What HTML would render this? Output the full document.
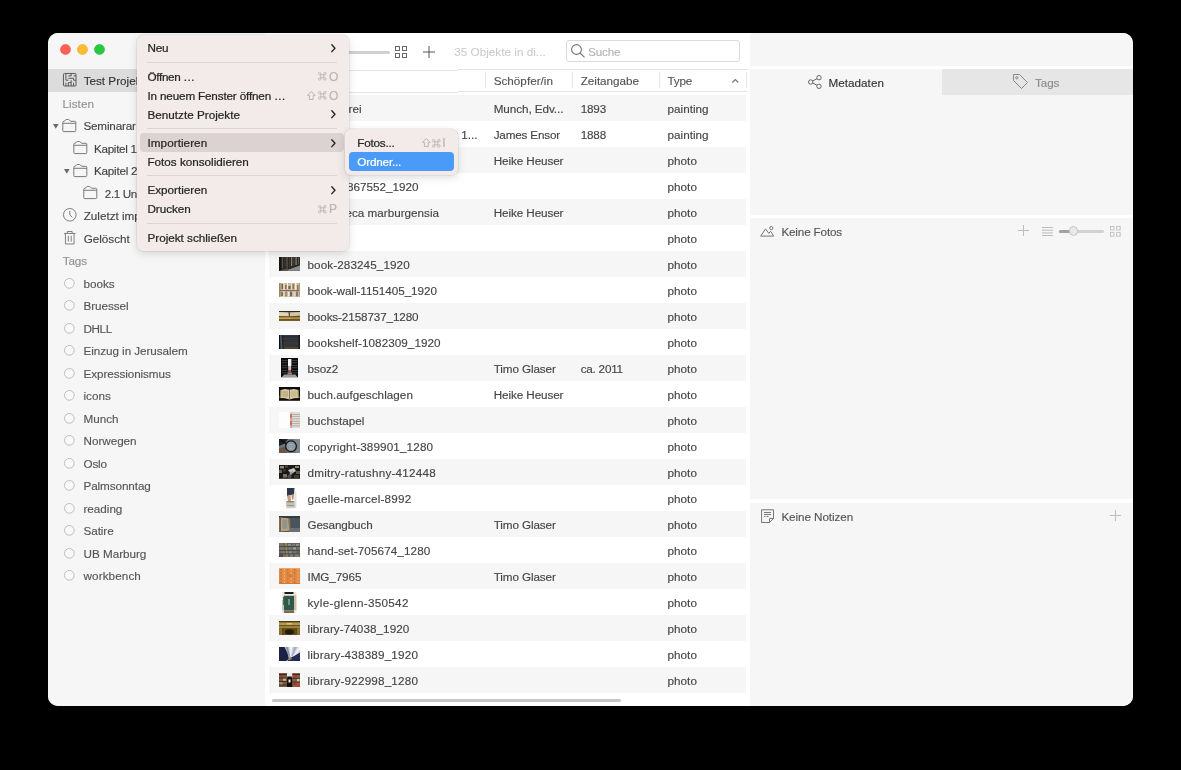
<!DOCTYPE html>
<html><head><meta charset="utf-8"><title>Tropy</title>
<style>
*{box-sizing:border-box;margin:0;padding:0}
html,body{width:1181px;height:770px;background:#000;overflow:hidden}
body{font-family:"Liberation Sans",sans-serif;font-size:11.7px;color:#444;position:relative;-webkit-text-stroke-width:.14px}
.abs{position:absolute}
#win{position:absolute;left:48.200px;top:32.800px;width:1084.700px;height:673px;background:#fff;border-radius:10px;overflow:hidden}
#side{position:absolute;left:0;top:0;width:217.400px;height:673px;background:#f6f6f6}
.t{position:absolute;white-space:nowrap;line-height:16px;height:16px}
.g{color:#919191}
.row{position:absolute;left:220.800px;width:477.700px;height:26px}
.row.s{background:#f6f6f6}
.th{position:absolute;overflow:hidden}
.circ{position:absolute;width:10.600px;height:10.600px;border:1px solid #bdbdbd;border-radius:50%;background:#f9f9f9;left:15.900px}
.p{position:absolute;left:702.200px;width:383px;background:#f6f6f6}
.menu{position:absolute;background:#f3ebea;border-radius:6px;box-shadow:0 0 0 .5px rgba(0,0,0,.10),0 3px 9px rgba(0,0,0,.13);color:#262626}
.menu .t{color:#262626;-webkit-text-stroke-width:.24px}
.sep{position:absolute;left:10px;right:12px;height:1px;background:#ddd5d4}
svg{position:absolute;overflow:visible}
#in{position:absolute;left:-.2px;top:.2px;width:1085px;height:673px}
#root{position:absolute;left:0;top:0;width:1181px;height:770px;will-change:transform}
</style></head><body><div id="root">
<div id="win"><div id="in">
<svg width="0" height="0" style="left:0;top:0"><defs><filter id="bl" x="-5%" y="-5%" width="110%" height="110%"><feGaussianBlur stdDeviation=".45"/></filter></defs></svg>

<div id="side">
<svg style="left:11.60px;top:10.80px" width="11" height="11" viewBox="0 0 11 11"><circle cx="5.500" cy="5.500" r="5.050" fill="#fe5f57" stroke="#e2463f" stroke-width=".5"/></svg>
<svg style="left:28.90px;top:10.80px" width="11" height="11" viewBox="0 0 11 11"><circle cx="5.500" cy="5.500" r="5.050" fill="#febc2e" stroke="#dfa023" stroke-width=".5"/></svg>
<svg style="left:46.20px;top:10.80px" width="11" height="11" viewBox="0 0 11 11"><circle cx="5.500" cy="5.500" r="5.050" fill="#28c840" stroke="#1dad2b" stroke-width=".5"/></svg>
<div class="abs" style="left:0;top:36.500px;width:217.400px;height:22.200px;background:#dcdcdc"></div>
<svg style="left:15px;top:40.200px" width="13.500" height="13.500" viewBox="0 0 14 14" fill="none" stroke="#555" stroke-width="1"><rect x=".5" y=".5" width="13" height="13" rx="1"/><path d="M3 .5v7h2.500M5.500 3h3M8.500 .5v2.500M11 3h2.500M5.500 5.500h5.500v2h2.500M3 10v3.500M5.500 13.500v-3.500h3v3.500M11 10v3.500M8.500 7.500v2.500"/></svg>
<div class="t" style="top:40.00px;left:35.70px;color:#333;">Test Projekt</div>
<div class="t g" style="top:63.00px;left:14.60px;letter-spacing:0.030px;">Listen</div>
<svg style="left:5.40px;top:90.85px" width="5.600" height="4.800" viewBox="0 0 5.600 4.800"><path d="M0 0h5.600l-2.800 4.800z" fill="#6a6a6a"/></svg>
<svg style="left:14.00px;top:86.00px" width="14.600" height="13" viewBox="0 0 14.600 13" fill="none" stroke="#787878" stroke-width="1"><path d="M.8 11.600Q.8 12.600 1.800 12.600H12.800Q13.800 12.600 13.800 11.600V3.300Q13.800 2.300 12.800 2.300H8.600L7.400 .9Q7.100 .5 6.600 .5H4.200Q3.700 .5 3.400 .9L2.300 2.300H1.800Q.8 2.300 .8 3.300Z"/><path d="M.8 4.300H13.800"/></svg>
<div class="t" style="top:85.00px;left:35.40px;letter-spacing:-0.174px;">Seminarar</div>
<svg style="left:24.70px;top:108.50px" width="14.600" height="13" viewBox="0 0 14.600 13" fill="none" stroke="#787878" stroke-width="1"><path d="M.8 11.600Q.8 12.600 1.800 12.600H12.800Q13.800 12.600 13.800 11.600V3.300Q13.800 2.300 12.800 2.300H8.600L7.400 .9Q7.100 .5 6.600 .5H4.200Q3.700 .5 3.400 .9L2.300 2.300H1.800Q.8 2.300 .8 3.300Z"/><path d="M.8 4.300H13.800"/></svg>
<div class="t" style="top:108.00px;left:46.00px;letter-spacing:-0.315px;">Kapitel 1</div>
<svg style="left:16.10px;top:135.85px" width="5.600" height="4.800" viewBox="0 0 5.600 4.800"><path d="M0 0h5.600l-2.800 4.800z" fill="#6a6a6a"/></svg>
<svg style="left:24.70px;top:131.00px" width="14.600" height="13" viewBox="0 0 14.600 13" fill="none" stroke="#787878" stroke-width="1"><path d="M.8 11.600Q.8 12.600 1.800 12.600H12.800Q13.800 12.600 13.800 11.600V3.300Q13.800 2.300 12.800 2.300H8.600L7.400 .9Q7.100 .5 6.600 .5H4.200Q3.700 .5 3.400 .9L2.300 2.300H1.800Q.8 2.300 .8 3.300Z"/><path d="M.8 4.300H13.800"/></svg>
<div class="t" style="top:130.00px;left:46.00px;letter-spacing:-0.248px;">Kapitel 2</div>
<svg style="left:34.80px;top:153.50px" width="14.600" height="13" viewBox="0 0 14.600 13" fill="none" stroke="#787878" stroke-width="1"><path d="M.8 11.600Q.8 12.600 1.800 12.600H12.800Q13.800 12.600 13.800 11.600V3.300Q13.800 2.300 12.800 2.300H8.600L7.400 .9Q7.100 .5 6.600 .5H4.200Q3.700 .5 3.400 .9L2.300 2.300H1.800Q.8 2.300 .8 3.300Z"/><path d="M.8 4.300H13.800"/></svg>
<div class="t" style="top:153.00px;left:56.80px;letter-spacing:-0.379px;">2.1 Un</div>
<svg style="left:15px;top:175.45px" width="13.600" height="13.600" viewBox="0 0 14 14" fill="none" stroke="#7a7a7a" stroke-width="1"><circle cx="7" cy="7" r="6.500"/><path d="M7 3v4.200l2.600 2.300"/></svg>
<div class="t" style="top:175.00px;left:35.70px;">Zuletzt importiert</div>
<svg style="left:16.20px;top:197.85px" width="11.500" height="13.500" viewBox="0 0 12 14" fill="none" stroke="#7a7a7a" stroke-width="1"><path d="M0 2.500h12M3.500 2.500v-2h5v2M1.500 2.500v11h9v-11M4.500 5v6M7.500 5v6"/></svg>
<div class="t" style="top:198.00px;left:35.70px;letter-spacing:-0.009px;">Gelöscht</div>
<div class="t g" style="top:220.00px;left:14.70px;letter-spacing:-0.104px;">Tags</div>
<svg style="left:15.90px;top:244.90px" width="10.700" height="10.700" viewBox="0 0 10.700 10.700"><circle cx="5.350" cy="5.350" r="4.850" fill="#f9f9f9" stroke="#bcbcbc" stroke-width="1"/></svg>
<div class="t" style="top:243.00px;left:35.50px;letter-spacing:-0.024px;color:#555;">books</div>
<svg style="left:15.90px;top:267.40px" width="10.700" height="10.700" viewBox="0 0 10.700 10.700"><circle cx="5.350" cy="5.350" r="4.850" fill="#f9f9f9" stroke="#bcbcbc" stroke-width="1"/></svg>
<div class="t" style="top:265.00px;left:35.50px;letter-spacing:-0.065px;color:#555;">Bruessel</div>
<svg style="left:15.90px;top:289.90px" width="10.700" height="10.700" viewBox="0 0 10.700 10.700"><circle cx="5.350" cy="5.350" r="4.850" fill="#f9f9f9" stroke="#bcbcbc" stroke-width="1"/></svg>
<div class="t" style="top:288.00px;left:35.50px;letter-spacing:-0.378px;color:#555;">DHLL</div>
<svg style="left:15.90px;top:312.40px" width="10.700" height="10.700" viewBox="0 0 10.700 10.700"><circle cx="5.350" cy="5.350" r="4.850" fill="#f9f9f9" stroke="#bcbcbc" stroke-width="1"/></svg>
<div class="t" style="top:310.00px;left:35.50px;letter-spacing:-0.055px;color:#555;">Einzug in Jerusalem</div>
<svg style="left:15.90px;top:334.90px" width="10.700" height="10.700" viewBox="0 0 10.700 10.700"><circle cx="5.350" cy="5.350" r="4.850" fill="#f9f9f9" stroke="#bcbcbc" stroke-width="1"/></svg>
<div class="t" style="top:333.00px;left:35.50px;letter-spacing:-0.075px;color:#555;">Expressionismus</div>
<svg style="left:15.90px;top:357.40px" width="10.700" height="10.700" viewBox="0 0 10.700 10.700"><circle cx="5.350" cy="5.350" r="4.850" fill="#f9f9f9" stroke="#bcbcbc" stroke-width="1"/></svg>
<div class="t" style="top:355.00px;left:35.50px;letter-spacing:-0.003px;color:#555;">icons</div>
<svg style="left:15.90px;top:379.90px" width="10.700" height="10.700" viewBox="0 0 10.700 10.700"><circle cx="5.350" cy="5.350" r="4.850" fill="#f9f9f9" stroke="#bcbcbc" stroke-width="1"/></svg>
<div class="t" style="top:378.00px;left:35.50px;letter-spacing:-0.003px;color:#555;">Munch</div>
<svg style="left:15.90px;top:402.40px" width="10.700" height="10.700" viewBox="0 0 10.700 10.700"><circle cx="5.350" cy="5.350" r="4.850" fill="#f9f9f9" stroke="#bcbcbc" stroke-width="1"/></svg>
<div class="t" style="top:400.00px;left:35.50px;letter-spacing:-0.029px;color:#555;">Norwegen</div>
<svg style="left:15.90px;top:424.90px" width="10.700" height="10.700" viewBox="0 0 10.700 10.700"><circle cx="5.350" cy="5.350" r="4.850" fill="#f9f9f9" stroke="#bcbcbc" stroke-width="1"/></svg>
<div class="t" style="top:423.00px;left:35.50px;letter-spacing:-0.189px;color:#555;">Oslo</div>
<svg style="left:15.90px;top:447.40px" width="10.700" height="10.700" viewBox="0 0 10.700 10.700"><circle cx="5.350" cy="5.350" r="4.850" fill="#f9f9f9" stroke="#bcbcbc" stroke-width="1"/></svg>
<div class="t" style="top:445.00px;left:35.50px;letter-spacing:-0.090px;color:#555;">Palmsonntag</div>
<svg style="left:15.90px;top:469.90px" width="10.700" height="10.700" viewBox="0 0 10.700 10.700"><circle cx="5.350" cy="5.350" r="4.850" fill="#f9f9f9" stroke="#bcbcbc" stroke-width="1"/></svg>
<div class="t" style="top:468.00px;left:35.50px;letter-spacing:-0.019px;color:#555;">reading</div>
<svg style="left:15.90px;top:492.40px" width="10.700" height="10.700" viewBox="0 0 10.700 10.700"><circle cx="5.350" cy="5.350" r="4.850" fill="#f9f9f9" stroke="#bcbcbc" stroke-width="1"/></svg>
<div class="t" style="top:490.00px;left:35.50px;letter-spacing:-0.077px;color:#555;">Satire</div>
<svg style="left:15.90px;top:514.90px" width="10.700" height="10.700" viewBox="0 0 10.700 10.700"><circle cx="5.350" cy="5.350" r="4.850" fill="#f9f9f9" stroke="#bcbcbc" stroke-width="1"/></svg>
<div class="t" style="top:513.00px;left:35.50px;letter-spacing:-0.017px;color:#555;">UB Marburg</div>
<svg style="left:15.90px;top:537.40px" width="10.700" height="10.700" viewBox="0 0 10.700 10.700"><circle cx="5.350" cy="5.350" r="4.850" fill="#f9f9f9" stroke="#bcbcbc" stroke-width="1"/></svg>
<div class="t" style="top:535.00px;left:35.50px;letter-spacing:0.102px;color:#555;">workbench</div>
</div>
<div class="abs" style="left:289px;top:17.600px;width:52.700px;height:3px;border-radius:2px;background:#d0d0d0"></div>
<svg style="left:347.00px;top:13.20px" width="12" height="12" viewBox="0 0 12 12" fill="none" stroke="#666" stroke-width="1"><rect x=".5" y=".5" width="4" height="4"/><rect x="7.500" y=".5" width="4" height="4"/><rect x=".5" y="7.500" width="4" height="4"/><rect x="7.500" y="7.500" width="4" height="4"/></svg>
<svg style="left:375.00px;top:12.80px" width="12" height="12" viewBox="0 0 12 12" fill="none" stroke="#555" stroke-width="1"><path d="M6.0 0v12M0 6.0h12"/></svg>
<div class="t" style="top:11.00px;left:406.20px;letter-spacing:0.029px;color:#cacaca;-webkit-text-stroke-width:.05px;">35 Objekte in di...</div>
<div class="abs" style="left:518px;top:7.400px;width:174px;height:21.200px;border:1px solid #dadada;border-radius:3px;background:#fff"></div>
<svg style="left:522.700px;top:11.300px" width="14" height="13.500" viewBox="0 0 14 13.500" fill="none" stroke="#777" stroke-width="1.100"><circle cx="5.500" cy="5.500" r="4.900"/><path d="M9 9l4.600 4.300"/></svg>
<div class="t" style="top:11.00px;left:540.00px;letter-spacing:-0.155px;color:#b4b4b4;">Suche</div>
<div class="abs" style="left:410px;top:36.100px;width:288.500px;height:1px;background:#e4e4e4"></div>
<div class="abs" style="left:410px;top:57.700px;width:288.500px;height:1px;background:#e4e4e4"></div>
<div class="abs" style="left:220.800px;top:36.800px;width:189.200px;height:1px;background:#e4e4e4"></div>
<div class="abs" style="left:220.800px;top:59.100px;width:189.200px;height:1px;background:#e4e4e4"></div>
<div class="abs" style="left:437.40px;top:39.500px;width:1px;height:16px;background:#e6e6e6"></div>
<div class="abs" style="left:523.90px;top:39.500px;width:1px;height:16px;background:#e6e6e6"></div>
<div class="abs" style="left:610.90px;top:39.500px;width:1px;height:16px;background:#e6e6e6"></div>
<div class="abs" style="left:697.50px;top:39.500px;width:1px;height:16px;background:#e6e6e6"></div>
<div class="t" style="top:40.00px;left:259.50px;color:#555;">Titel</div>
<div class="t" style="top:40.00px;left:445.70px;letter-spacing:0.010px;color:#555;">Schöpfer/in</div>
<div class="t" style="top:40.00px;left:532.70px;letter-spacing:-0.015px;color:#555;">Zeitangabe</div>
<div class="t" style="top:40.00px;left:619.50px;letter-spacing:-0.191px;color:#555;">Type</div>
<svg style="left:684.300px;top:45.800px" width="6.600" height="3.800" viewBox="0 0 7 4" fill="none" stroke="#777" stroke-width="1.200"><path d="M.3 3.700l3.200-3.200 3.200 3.200"/></svg>
<div class="row s" style="top:62.3px">
<div class="t" style="top:5.70px;right:385.00px;">Der Schrei</div>
<div class="t" style="top:5.70px;left:224.90px;letter-spacing:-0.066px;">Munch, Edv...</div>
<div class="t" style="top:5.70px;left:311.90px;letter-spacing:-0.182px;">1893</div>
<div class="t" style="top:5.70px;left:398.70px;letter-spacing:0.027px;">painting</div>
</div>
<div class="row" style="top:88.3px">
<div class="t" style="top:5.70px;right:269.10px;">Einzug Christi in Brüssel im Jahr 1...</div>
<div class="t" style="top:5.70px;left:224.90px;letter-spacing:-0.180px;">James Ensor</div>
<div class="t" style="top:5.70px;left:311.90px;letter-spacing:-0.182px;">1888</div>
<div class="t" style="top:5.70px;left:398.70px;letter-spacing:0.027px;">painting</div>
</div>
<div class="row s" style="top:114.3px">
<div class="t" style="top:5.70px;left:38.70px;">bibliothek</div>
<div class="t" style="top:5.70px;left:224.90px;letter-spacing:-0.090px;">Heike Heuser</div>
<div class="t" style="top:5.70px;left:398.70px;letter-spacing:0.044px;">photo</div>
</div>
<div class="row" style="top:140.3px">
<div class="t" style="top:5.70px;right:328.00px;">book-1867552_1920</div>
<div class="t" style="top:5.70px;left:398.70px;letter-spacing:0.044px;">photo</div>
</div>
<div class="row s" style="top:166.3px">
<div class="t" style="top:5.70px;right:307.50px;">Bibliotheca marburgensia</div>
<div class="t" style="top:5.70px;left:224.90px;letter-spacing:-0.090px;">Heike Heuser</div>
<div class="t" style="top:5.70px;left:398.70px;letter-spacing:0.044px;">photo</div>
</div>
<div class="row" style="top:192.3px">
<div class="t" style="top:5.70px;left:38.70px;">book</div>
<div class="t" style="top:5.70px;left:398.70px;letter-spacing:0.044px;">photo</div>
</div>
<div class="row s" style="top:218.3px">
<svg class="th" style="left:10.30px;top:6.00px;overflow:hidden" width="21" height="13.8" viewBox="0 0 21 13.8"><g filter="url(#bl)"><rect x="0" y="0" width="21" height="13.8" fill="#2b2723"/><rect x="0" y="0" width="2" height="13.8" fill="#141210"/><rect x="3" y="0" width="1" height="11" fill="#575149"/><rect x="5.5" y="0" width="0.8" height="10" fill="#423d37"/><rect x="7.5" y="0" width="1" height="10.5" fill="#6f695f"/><rect x="10" y="0" width="0.8" height="10" fill="#4a453e"/><rect x="12" y="0" width="1.2" height="9" fill="#857f74"/><rect x="14.5" y="0" width="0.8" height="8.5" fill="#565149"/><rect x="16.5" y="0" width="1.2" height="8" fill="#8c867b"/><rect x="19" y="0" width="1" height="7.5" fill="#5d574f"/><polygon points="6,13.8 21,8.500 21,13.8" fill="#8b8c8e"/><polygon points="0,13.8 9,11 9,13.8" fill="#55524d"/></g></svg>
<div class="t" style="top:5.70px;left:38.70px;letter-spacing:0.097px;">book-283245_1920</div>
<div class="t" style="top:5.70px;left:398.70px;letter-spacing:0.044px;">photo</div>
</div>
<div class="row" style="top:244.3px">
<svg class="th" style="left:10.30px;top:6.00px;overflow:hidden" width="21" height="13.8" viewBox="0 0 21 13.8"><g filter="url(#bl)"><rect x="0" y="0" width="21" height="13.8" fill="#c8b8a0"/><rect x="0" y="0" width="1.5" height="13.8" fill="#9c8467"/><rect x="2.5" y="1" width="1.5" height="5" fill="#7a6048"/><rect x="4.5" y="0" width="1" height="13.8" fill="#efe9dc"/><rect x="6" y="2" width="1.5" height="4" fill="#8b6f52"/><rect x="8" y="0" width="1" height="6" fill="#f3eee3"/><rect x="9.5" y="3" width="2" height="3" fill="#6d5843"/><rect x="12" y="0" width="1" height="13.8" fill="#e9e1d0"/><rect x="13.5" y="1" width="1.5" height="5" fill="#8a7058"/><rect x="16" y="0" width="1.5" height="7" fill="#f1ebdf"/><rect x="18" y="2" width="1.5" height="5" fill="#94785a"/><rect x="20" y="0" width="1" height="13.8" fill="#b09a7e"/><rect x="1" y="7" width="19" height="1" fill="#7f6a52"/><rect x="2" y="9" width="2" height="4" fill="#8c7358"/><rect x="6" y="8.5" width="2" height="5" fill="#a68d6e"/><rect x="9" y="9" width="1.5" height="4" fill="#f0eadd"/><rect x="11" y="8.5" width="2" height="5" fill="#7b6450"/><rect x="14.5" y="9" width="2" height="4" fill="#ded3bf"/><rect x="17" y="8.5" width="2" height="5" fill="#8f775b"/></g></svg>
<div class="t" style="top:5.70px;left:38.70px;letter-spacing:-0.042px;">book-wall-1151405_1920</div>
<div class="t" style="top:5.70px;left:398.70px;letter-spacing:0.044px;">photo</div>
</div>
<div class="row s" style="top:270.3px">
<svg class="th" style="left:10.30px;top:8.00px;overflow:hidden" width="21" height="9.8" viewBox="0 0 21 9.8"><g filter="url(#bl)"><rect x="0" y="0" width="21" height="9.8" fill="#8a6b2e"/><rect x="0" y="0" width="21" height="1" fill="#2e2a20"/><polygon points="0,1 9.500,1.500 10,5.500 0,5" fill="#ddd6bd"/><polygon points="11,1.500 21,1 21,4.500 11,5.500" fill="#cfc8ae"/><polygon points="9.500,1.500 11,1.500 11,5.500 10,5.500" fill="#5c5a40"/><rect x="0" y="5.5" width="21" height="0.8" fill="#3b301c"/><rect x="0" y="6.3" width="21" height="1.7" fill="#c7a552"/><rect x="0" y="8" width="21" height="1.8" fill="#6f5423"/><rect x="12" y="6.3" width="9" height="1.2" fill="#9b7d3a"/></g></svg>
<div class="t" style="top:5.70px;left:38.70px;letter-spacing:-0.117px;">books-2158737_1280</div>
<div class="t" style="top:5.70px;left:398.70px;letter-spacing:0.044px;">photo</div>
</div>
<div class="row" style="top:296.3px">
<svg class="th" style="left:10.30px;top:5.90px;overflow:hidden" width="21" height="14" viewBox="0 0 21 14"><g filter="url(#bl)"><rect x="0" y="0" width="21" height="14" fill="#22262a"/><polygon points="0,0 2.500,0 3.500,14 1,14" fill="#4d5a64"/><polygon points="0,0 1,0 1.500,14 0,14" fill="#0f1113"/><rect x="4" y="0" width="17" height="0.8" fill="#3a3f45"/><rect x="4" y="3.5" width="17" height="0.7" fill="#4b5057"/><rect x="4" y="7" width="17" height="0.7" fill="#3f444a"/><rect x="4" y="10.5" width="17" height="0.7" fill="#4a4038"/><rect x="5" y="1.2" width="15" height="2" fill="#2d3237"/><rect x="5" y="4.5" width="15" height="2.2" fill="#33383d"/><rect x="5" y="8" width="15" height="2.2" fill="#3a3631"/><rect x="5" y="11.5" width="15" height="2.5" fill="#4d4238"/><rect x="19.5" y="0" width="1.5" height="14" fill="#15181a"/></g></svg>
<div class="t" style="top:5.70px;left:38.70px;letter-spacing:0.056px;">bookshelf-1082309_1920</div>
<div class="t" style="top:5.70px;left:398.70px;letter-spacing:0.044px;">photo</div>
</div>
<div class="row s" style="top:322.3px">
<svg class="th" style="left:12.10px;top:2.80px;overflow:hidden" width="17.4" height="20.2" viewBox="0 0 17.4 20.2"><g filter="url(#bl)"><rect x="0" y="0" width="17.4" height="20.2" fill="#0c0c0c"/><rect x="1" y="2" width="5.5" height="0.6" fill="#5a5a5a"/><rect x="11" y="2" width="5.5" height="0.6" fill="#5a5a5a"/><rect x="1" y="4.5" width="5.5" height="0.6" fill="#5a5a5a"/><rect x="11" y="4.5" width="5.5" height="0.6" fill="#5a5a5a"/><rect x="1" y="7" width="5.5" height="0.6" fill="#5a5a5a"/><rect x="11" y="7" width="5.5" height="0.6" fill="#5a5a5a"/><rect x="1" y="9.5" width="5.5" height="0.6" fill="#5a5a5a"/><rect x="11" y="9.5" width="5.5" height="0.6" fill="#5a5a5a"/><rect x="1" y="12" width="5.5" height="0.6" fill="#5a5a5a"/><rect x="11" y="12" width="5.5" height="0.6" fill="#5a5a5a"/><rect x="1" y="14.5" width="5.5" height="0.6" fill="#5a5a5a"/><rect x="11" y="14.5" width="5.5" height="0.6" fill="#5a5a5a"/><rect x="7" y="1" width="3.4" height="7" fill="#f4f4f4"/><rect x="7.2" y="8" width="3" height="4" fill="#c4c4c4"/><rect x="7.2" y="12" width="3" height="2.5" fill="#b2544c"/><rect x="6.5" y="14.5" width="4.4" height="2" fill="#8a8a8a"/><polygon points="0,20.2 3,16.500 14.400,16.500 17.400,20.2" fill="#9b9b9b"/><rect x="0" y="19.2" width="17.4" height="1" fill="#c9c9c9"/></g></svg>
<div class="t" style="top:5.70px;left:38.70px;letter-spacing:-0.084px;">bsoz2</div>
<div class="t" style="top:5.70px;left:224.90px;letter-spacing:-0.107px;">Timo Glaser</div>
<div class="t" style="top:5.70px;left:311.90px;letter-spacing:-0.227px;">ca. 2011</div>
<div class="t" style="top:5.70px;left:398.70px;letter-spacing:0.044px;">photo</div>
</div>
<div class="row" style="top:348.3px">
<svg class="th" style="left:10.30px;top:6.00px;overflow:hidden" width="21" height="13.8" viewBox="0 0 21 13.8"><g filter="url(#bl)"><rect x="0" y="0" width="21" height="13.8" fill="#0e0c09"/><polygon points="1.500,3 6,2 10.500,2.800 15,2 19.500,3 20.300,11 15,11.300 10.500,12.500 6,11.300 .7,11" fill="#d8c9a2"/><polygon points="1.500,3 2.500,3.300 2,10.500 .7,11" fill="#8d7a52"/><polygon points="19.500,3 18.500,3.300 19,10.500 20.300,11" fill="#8d7a52"/><rect x="10.2" y="2.8" width="0.7" height="9.5" fill="#5e4f33"/><rect x="3.5" y="4" width="5.5" height="6" fill="#c3b288"/><rect x="12" y="4" width="5.5" height="6" fill="#cbbb92"/></g></svg>
<div class="t" style="top:5.70px;left:38.70px;letter-spacing:0.048px;">buch.aufgeschlagen</div>
<div class="t" style="top:5.70px;left:224.90px;letter-spacing:-0.090px;">Heike Heuser</div>
<div class="t" style="top:5.70px;left:398.70px;letter-spacing:0.044px;">photo</div>
</div>
<div class="row s" style="top:374.3px">
<svg class="th" style="left:10.30px;top:4.90px;overflow:hidden" width="21" height="16" viewBox="0 0 21 16"><g filter="url(#bl)"><rect x="0" y="0" width="21" height="16" fill="#fdfdfd"/><rect x="11.5" y="0" width="9.5" height="16" fill="#dedad4"/><rect x="11.5" y="2" width="9.5" height="0.7" fill="#a8a29a"/><rect x="11.5" y="4.3" width="9.5" height="0.7" fill="#a8a29a"/><rect x="11.5" y="6.6" width="9.5" height="0.7" fill="#a8a29a"/><rect x="11.5" y="8.9" width="9.5" height="0.7" fill="#a8a29a"/><rect x="11.5" y="11.2" width="9.5" height="0.7" fill="#a8a29a"/><rect x="11.5" y="13.5" width="9.5" height="0.7" fill="#a8a29a"/><rect x="11.5" y="0" width="1.2" height="2" fill="#c8c2b8"/><rect x="11.3" y="2" width="1.3" height="4.6" fill="#c0473a"/><rect x="11.5" y="6.6" width="1.2" height="2.3" fill="#d98a6a"/><rect x="11.3" y="8.9" width="1.3" height="4.6" fill="#b8443a"/><rect x="11.5" y="13.5" width="1.2" height="2.5" fill="#a89888"/></g></svg>
<div class="t" style="top:5.70px;left:38.70px;letter-spacing:0.041px;">buchstapel</div>
<div class="t" style="top:5.70px;left:398.70px;letter-spacing:0.044px;">photo</div>
</div>
<div class="row" style="top:400.3px">
<svg class="th" style="left:10.30px;top:5.90px;overflow:hidden" width="21" height="14" viewBox="0 0 21 14"><g filter="url(#bl)"><rect x="0" y="0" width="21" height="14" fill="#6c767e"/><polygon points="0,0 9,0 5,5 0,7" fill="#1d2024"/><polygon points="0,9 6,8 8,14 0,14" fill="#6a5446"/><polygon points="15,0 21,0 21,14 17,14" fill="#7d8890"/><circle cx="12" cy="7.300" r="5.400" fill="#8e9aa2" stroke="#15171a" stroke-width="1.300"/><polygon points="0,0 2,0 8,4.500 7,5.500" fill="#0e0f11"/><rect x="10" y="5" width="4" height="0.6" fill="#aab4ba"/><rect x="10" y="7" width="4.5" height="0.6" fill="#a3adb4"/><rect x="10" y="9" width="4" height="0.6" fill="#aab4ba"/></g></svg>
<div class="t" style="top:5.70px;left:38.70px;letter-spacing:0.136px;">copyright-389901_1280</div>
<div class="t" style="top:5.70px;left:398.70px;letter-spacing:0.044px;">photo</div>
</div>
<div class="row s" style="top:426.3px">
<svg class="th" style="left:10.30px;top:6.00px;overflow:hidden" width="21" height="13.8" viewBox="0 0 21 13.8"><g filter="url(#bl)"><rect x="0" y="0" width="21" height="13.8" fill="#1b1916"/><rect x="1" y="1" width="4" height="2.5" fill="#8a8476"/><rect x="6" y="0.5" width="3" height="2" fill="#4b463d"/><rect x="0" y="5" width="3" height="3" fill="#6b6558"/><polygon points="9,5 15,3 17,6 12,9" fill="#c9c6bd"/><polygon points="11,7 14,6 13,9.500 10.500,10" fill="#8fa0a8"/><rect x="16" y="1" width="4" height="2" fill="#8d8777"/><rect x="17" y="6" width="4" height="3" fill="#5d584e"/><rect x="4" y="9" width="4" height="3.5" fill="#7a7263"/><circle cx="10.500" cy="11.500" r="2" fill="#55504a"/><rect x="15" y="10" width="5" height="3" fill="#3d3a34"/><rect x="4" y="4.5" width="3" height="2" fill="#3e3a33"/></g></svg>
<div class="t" style="top:5.70px;left:38.70px;letter-spacing:0.229px;">dmitry-ratushny-412448</div>
<div class="t" style="top:5.70px;left:398.70px;letter-spacing:0.044px;">photo</div>
</div>
<div class="row" style="top:452.3px">
<svg class="th" style="left:13.60px;top:2.40px;overflow:hidden" width="14.4" height="21" viewBox="0 0 14.4 21"><g filter="url(#bl)"><rect x="0" y="0" width="14.4" height="21" fill="#fcfbfa"/><polygon points="5,0 12.500,0 12,6.500 8.500,7 5,8" fill="#2d384c"/><polygon points="5,8 8.500,7 9,13 6,13" fill="#c59c82"/><polygon points="9.500,6.800 12,6.500 11.500,11 10,12" fill="#b98f76"/><rect x="4.5" y="13" width="8" height="1.8" fill="#8b8781"/><rect x="4" y="14.8" width="9" height="2" fill="#c4c0b9"/><rect x="4.5" y="16.8" width="8.5" height="1.8" fill="#9c978f"/><rect x="4" y="18.6" width="9" height="1.6" fill="#d1cdc6"/><rect x="12.5" y="4" width="1.9" height="16" fill="#e3ddd5"/></g></svg>
<div class="t" style="top:5.70px;left:38.70px;letter-spacing:0.219px;">gaelle-marcel-8992</div>
<div class="t" style="top:5.70px;left:398.70px;letter-spacing:0.044px;">photo</div>
</div>
<div class="row s" style="top:478.3px">
<svg class="th" style="left:10.30px;top:4.75px;overflow:hidden" width="21" height="16.3" viewBox="0 0 21 16.3"><g filter="url(#bl)"><rect x="0" y="0" width="21" height="16.3" fill="#4b535d"/><rect x="0" y="0" width="21" height="2" fill="#353b43"/><rect x="10" y="12" width="11" height="4.3" fill="#6b7076"/><polygon points=".5,1.500 9.500,2.200 10.200,14.800 .5,15.500" fill="#b7a27c"/><polygon points=".5,1.500 2,1.800 2,15.200 .5,15.500" fill="#6f6047"/><polygon points="3.500,3.500 8,3.800 8.300,12.500 3.500,12.800" fill="#8e938c"/><polygon points="9.500,2.200 11,3 11.500,14 10.200,14.800" fill="#8a7857"/></g></svg>
<div class="t" style="top:5.70px;left:38.70px;letter-spacing:-0.125px;">Gesangbuch</div>
<div class="t" style="top:5.70px;left:224.90px;letter-spacing:-0.107px;">Timo Glaser</div>
<div class="t" style="top:5.70px;left:398.70px;letter-spacing:0.044px;">photo</div>
</div>
<div class="row" style="top:504.3px">
<svg class="th" style="left:10.30px;top:5.90px;overflow:hidden" width="21" height="14" viewBox="0 0 21 14"><g filter="url(#bl)"><rect x="0" y="0" width="21" height="14" fill="#646660"/><polygon points="0,0 4,0 7,14 3,14" fill="#7a7466"/><polygon points="6,0 7.500,0 9,14 7.500,14" fill="#a08a62"/><rect x="0" y="3" width="21" height="0.8" fill="#3e3f3d"/><rect x="0" y="7" width="21" height="0.8" fill="#444542"/><rect x="0" y="10.5" width="21" height="0.8" fill="#3e3f3d"/><rect x="9" y="1" width="3" height="1.8" fill="#8f8e88"/><rect x="13" y="1" width="3" height="1.8" fill="#7a7973"/><rect x="17" y="1" width="3" height="1.8" fill="#93928b"/><rect x="9.5" y="4.2" width="3" height="2.5" fill="#7e7d76"/><rect x="14" y="4.2" width="3" height="2.5" fill="#99988f"/><rect x="18" y="4.2" width="3" height="2.5" fill="#72716b"/><rect x="10" y="8.2" width="3" height="2" fill="#8a8982"/><rect x="14.5" y="8.2" width="3" height="2" fill="#767570"/><rect x="11" y="11.6" width="3" height="2" fill="#83827b"/><rect x="16" y="11.6" width="4" height="2" fill="#8f8572"/><rect x="0" y="11" width="4" height="3" fill="#4d4d4a"/></g></svg>
<div class="t" style="top:5.70px;left:38.70px;letter-spacing:0.100px;">hand-set-705674_1280</div>
<div class="t" style="top:5.70px;left:398.70px;letter-spacing:0.044px;">photo</div>
</div>
<div class="row s" style="top:530.3px">
<svg class="th" style="left:10.30px;top:4.90px;overflow:hidden" width="21" height="16" viewBox="0 0 21 16"><g filter="url(#bl)"><rect x="0" y="0" width="21" height="16" fill="#e08a45"/><circle cx="2.0" cy="1.8" r=".8" fill="#c56a2a"/><circle cx="5.4" cy="1.8" r=".8" fill="#f3bd85"/><circle cx="8.8" cy="1.8" r=".8" fill="#c9702f"/><circle cx="12.2" cy="1.8" r=".8" fill="#f0b67b"/><circle cx="15.6" cy="1.8" r=".8" fill="#c2682a"/><circle cx="19.0" cy="1.8" r=".8" fill="#eeb074"/><circle cx="2.0" cy="4.9" r=".8" fill="#c56a2a"/><circle cx="5.4" cy="4.9" r=".8" fill="#f3bd85"/><circle cx="8.8" cy="4.9" r=".8" fill="#c9702f"/><circle cx="12.2" cy="4.9" r=".8" fill="#f0b67b"/><circle cx="15.6" cy="4.9" r=".8" fill="#c2682a"/><circle cx="19.0" cy="4.9" r=".8" fill="#eeb074"/><circle cx="2.0" cy="8.0" r=".8" fill="#c56a2a"/><circle cx="5.4" cy="8.0" r=".8" fill="#f3bd85"/><circle cx="8.8" cy="8.0" r=".8" fill="#c9702f"/><circle cx="12.2" cy="8.0" r=".8" fill="#f0b67b"/><circle cx="15.6" cy="8.0" r=".8" fill="#c2682a"/><circle cx="19.0" cy="8.0" r=".8" fill="#eeb074"/><circle cx="2.0" cy="11.1" r=".8" fill="#c56a2a"/><circle cx="5.4" cy="11.1" r=".8" fill="#f3bd85"/><circle cx="8.8" cy="11.1" r=".8" fill="#c9702f"/><circle cx="12.2" cy="11.1" r=".8" fill="#f0b67b"/><circle cx="15.6" cy="11.1" r=".8" fill="#c2682a"/><circle cx="19.0" cy="11.1" r=".8" fill="#eeb074"/><circle cx="2.0" cy="14.2" r=".8" fill="#c56a2a"/><circle cx="5.4" cy="14.2" r=".8" fill="#f3bd85"/><circle cx="8.8" cy="14.2" r=".8" fill="#c9702f"/><circle cx="12.2" cy="14.2" r=".8" fill="#f0b67b"/><circle cx="15.6" cy="14.2" r=".8" fill="#c2682a"/><circle cx="19.0" cy="14.2" r=".8" fill="#eeb074"/><rect x="0" y="0" width="21" height="1" fill="#eba56a"/><rect x="0" y="15" width="21" height="1" fill="#d07a38"/><rect x="8" y="6.5" width="5" height="2.5" fill="#d67c3a"/></g></svg>
<div class="t" style="top:5.70px;left:38.70px;letter-spacing:-0.092px;">IMG_7965</div>
<div class="t" style="top:5.70px;left:224.90px;letter-spacing:-0.107px;">Timo Glaser</div>
<div class="t" style="top:5.70px;left:398.70px;letter-spacing:0.044px;">photo</div>
</div>
<div class="row" style="top:556.3px">
<svg class="th" style="left:13.60px;top:2.40px;overflow:hidden" width="14.4" height="21" viewBox="0 0 14.4 21"><g filter="url(#bl)"><rect x="0" y="0" width="14.4" height="21" fill="#ebe8e1"/><rect x="2.5" y="0" width="9" height="2" fill="#1c1f1d"/><rect x="3" y="2" width="8.5" height="1.8" fill="#e8e8e2"/><rect x="1.8" y="3.8" width="10.5" height="14.5" fill="#2d5847"/><rect x="1" y="5" width="1.3" height="8" fill="#4a6b5c"/><rect x="6" y="7" width="2" height="6" fill="#6f9483"/><rect x="12.3" y="3" width="2.1" height="15" fill="#d9bba2"/><rect x="2" y="18.3" width="10" height="2.7" fill="#7b6b59"/><rect x="0" y="8" width="1" height="10" fill="#c9c3b8"/></g></svg>
<div class="t" style="top:5.70px;left:38.70px;letter-spacing:0.296px;">kyle-glenn-350542</div>
<div class="t" style="top:5.70px;left:398.70px;letter-spacing:0.044px;">photo</div>
</div>
<div class="row s" style="top:582.3px">
<svg class="th" style="left:10.30px;top:5.80px;overflow:hidden" width="21" height="14.2" viewBox="0 0 21 14.2"><g filter="url(#bl)"><rect x="0" y="0" width="21" height="14.2" fill="#7b6125"/><rect x="0" y="0" width="21" height="1.5" fill="#4d3c15"/><rect x="0" y="1.5" width="21" height="2.5" fill="#b79a4c"/><rect x="0" y="4" width="21" height="1.2" fill="#6a5220"/><rect x="0" y="5.2" width="21" height="2" fill="#a3863e"/><polygon points="0,7.200 21,7.200 21,14.2 0,14.2" fill="#5e4a1d"/><ellipse cx="10.500" cy="10.800" rx="4.500" ry="2.600" fill="#241b0b"/><rect x="0" y="7.2" width="3" height="7" fill="#8a6f2f"/><rect x="18" y="7.2" width="3" height="7" fill="#8a6f2f"/><rect x="8" y="2" width="5" height="1.5" fill="#d9c27a"/></g></svg>
<div class="t" style="top:5.70px;left:38.70px;letter-spacing:0.065px;">library-74038_1920</div>
<div class="t" style="top:5.70px;left:398.70px;letter-spacing:0.044px;">photo</div>
</div>
<div class="row" style="top:608.3px">
<svg class="th" style="left:10.30px;top:5.75px;overflow:hidden" width="21" height="14.3" viewBox="0 0 21 14.3"><g filter="url(#bl)"><rect x="0" y="0" width="21" height="14.3" fill="#d5d7e0"/><polygon points="0,0 5.500,0 8.500,6 10,11.500 7,14.300 0,14.300" fill="#1c2045"/><polygon points="21,5.500 21,14.300 8,14.300 11,11 16,8.500" fill="#272c54"/><polygon points="6.500,0 9,0 11,9 10,10.500" fill="#8e93ab"/><polygon points="11,0 13,0 12,9 11.200,9" fill="#f4f5f8"/><polygon points="15,0 18,0 13.500,9 12.500,9" fill="#a9adbf"/><polygon points="19.500,0 21,0 21,3 14.500,9.500" fill="#f1f2f6"/><polygon points="9,11.500 12,10 13,12 10,13.500" fill="#8d8266"/></g></svg>
<div class="t" style="top:5.70px;left:38.70px;letter-spacing:0.177px;">library-438389_1920</div>
<div class="t" style="top:5.70px;left:398.70px;letter-spacing:0.044px;">photo</div>
</div>
<div class="row s" style="top:634.3px">
<svg class="th" style="left:10.30px;top:5.75px;overflow:hidden" width="21" height="14.3" viewBox="0 0 21 14.3"><g filter="url(#bl)"><rect x="0" y="0" width="21" height="14.3" fill="#6d4b37"/><rect x="0" y="0" width="8" height="14.3" fill="#7d5a43"/><rect x="0" y="1" width="7.5" height="1.2" fill="#3a2a20"/><rect x="0" y="4.5" width="7.5" height="1" fill="#3a2a20"/><rect x="0" y="8" width="7.5" height="1" fill="#3a2a20"/><rect x="0" y="11.5" width="7.5" height="1" fill="#3a2a20"/><rect x="1" y="2.3" width="2.5" height="2" fill="#a8392f"/><rect x="4" y="5.6" width="3" height="2.2" fill="#c9b08c"/><rect x="0.5" y="9.2" width="3" height="2.2" fill="#8c9a6a"/><rect x="8" y="0" width="5.5" height="4.5" fill="#eceae6"/><polygon points="8.300,3.500 12.800,3.500 13.500,14.300 7.800,14.300" fill="#14110e"/><rect x="9.5" y="6.5" width="2" height="3" fill="#e9e7e3"/><rect x="13.5" y="0" width="7.5" height="14.3" fill="#85604a"/><rect x="13.5" y="1" width="7.5" height="1.1" fill="#3a2a20"/><rect x="13.5" y="4.8" width="7.5" height="1" fill="#3a2a20"/><rect x="13.5" y="8.5" width="7.5" height="1" fill="#3a2a20"/><rect x="14.5" y="2.3" width="3" height="2.3" fill="#b23a30"/><rect x="18" y="5.9" width="2.5" height="2.4" fill="#d8c3a0"/><rect x="14.5" y="9.6" width="3" height="2.4" fill="#a8362c"/><rect x="18" y="11.5" width="3" height="2.8" fill="#c23b30"/></g></svg>
<div class="t" style="top:5.70px;left:38.70px;letter-spacing:0.177px;">library-922998_1280</div>
<div class="t" style="top:5.70px;left:398.70px;letter-spacing:0.044px;">photo</div>
</div>
<div class="abs" style="left:224px;top:665.600px;width:349px;height:3.500px;border-radius:2px;background:#c6c6c6"></div>
<div class="p" style="top:0;height:32.800px"></div>
<div class="p" style="top:36.100px;height:145.500px"></div>
<div class="p" style="top:185.300px;height:281.100px"></div>
<div class="p" style="top:470.200px;height:203px"></div>
<div class="abs" style="left:894px;top:36.100px;width:191px;height:25.700px;background:#e6e6e6"></div>
<svg style="left:760px;top:42px" width="14" height="14" viewBox="0 0 14 14" fill="none" stroke="#666" stroke-width="1"><circle cx="2.700" cy="7" r="2.200"/><circle cx="11" cy="2.700" r="2.200"/><circle cx="11" cy="11.300" r="2.200"/><path d="M4.700 6l4.300-2.300M4.700 8l4.300 2.300"/></svg>
<div class="t" style="top:42.00px;left:780.50px;letter-spacing:0.023px;color:#333;">Metadaten</div>
<svg style="left:965px;top:41.500px" width="15" height="15" viewBox="0 0 15 15" fill="none" stroke="#888" stroke-width="1"><path d="M.5 .5h6l8 8-6 6-8-8z"/><circle cx="3.800" cy="3.800" r="1.100"/></svg>
<div class="t" style="top:42.00px;left:987.00px;letter-spacing:-0.104px;color:#8a8a8a;">Tags</div>
<svg style="left:712px;top:193px" width="14" height="11" viewBox="0 0 14 11" fill="none" stroke="#777" stroke-width="1" stroke-linejoin="round"><circle cx="11.300" cy="2.100" r="1.600"/><path d="M.7 10.100L5.500 2.900L8.800 7.300L10.600 5.300L13.600 10.100Z"/></svg>
<div class="t" style="top:191.00px;left:733.40px;letter-spacing:-0.158px;color:#555;">Keine Fotos</div>
<svg style="left:970.10px;top:192.20px" width="11" height="11" viewBox="0 0 11 11" fill="none" stroke="#bdbdbd" stroke-width="1"><path d="M5.5 0v11M0 5.5h11"/></svg>
<svg style="left:994px;top:193.600px" width="11" height="9" viewBox="0 0 11 9" stroke="#bdbdbd" stroke-width="1"><path d="M0 .5h11M0 3.200h11M0 5.900h11M0 8.500h11"/></svg>
<div class="abs" style="left:1010.800px;top:196.700px;width:45px;height:3.400px;border-radius:2px;background:#d2d2d2"></div>
<div class="abs" style="left:1010.800px;top:196.700px;width:14px;height:3.400px;border-radius:2px;background:#a2a2a2"></div>
<div class="abs" style="left:1020.700px;top:193.300px;width:9.500px;height:9.500px;border-radius:50%;background:#e9e9e9;border:1px solid #c6c6c6"></div>
<svg style="left:1061.90px;top:193.10px" width="10.6" height="10.6" viewBox="0 0 12 12" fill="none" stroke="#bdbdbd" stroke-width="1"><rect x=".5" y=".5" width="4" height="4"/><rect x="7.500" y=".5" width="4" height="4"/><rect x=".5" y="7.500" width="4" height="4"/><rect x="7.500" y="7.500" width="4" height="4"/></svg>
<svg style="left:713px;top:476px" width="13" height="14" viewBox="0 0 13 14" fill="none" stroke="#777" stroke-width="1"><path d="M.6 .8h11.900v8.700l-4 4h-7.900zM8.500 13.500v-4h4M3 3.500h7M3 5.500h7M3 7.500h1.500M5.500 7.500h2"/></svg>
<div class="t" style="top:476.00px;left:733.40px;letter-spacing:-0.080px;color:#555;">Keine Notizen</div>
<svg style="left:1061.90px;top:477.50px" width="11" height="11" viewBox="0 0 11 11" fill="none" stroke="#bdbdbd" stroke-width="1"><path d="M5.5 0v11M0 5.5h11"/></svg>
</div></div>
<div class="menu" style="left:137.4px;top:34.8px;width:211.600px;height:216px">
<div class="t" style="top:5.20px;left:10.10px;letter-spacing:-0.221px;">Neu</div><svg style="left:193.8px;top:9.0px" width="4.800" height="8.400" viewBox="0 0 5 9" fill="none" stroke="#262626" stroke-width="1.500" stroke-linecap="round" stroke-linejoin="round"><path d="M.8 .8l3.400 3.700-3.400 3.700"/></svg>
<div class="sep" style="top:27.4px"></div>
<div class="t" style="top:34.20px;left:10.10px;letter-spacing:-0.320px;">Öffnen …</div><div class="t" style="top:34.20px;left:191.60px;color:#bdb5b4;font-size:12px;">O</div><svg style="left:181.10px;top:37.40px" width="8.6" height="8.6" viewBox="0 0 10 10" fill="none" stroke="#bdb5b4" stroke-width="1.050"><path d="M3.300 1.900A1.400 1.400 0 1 0 1.900 3.300H8.100A1.400 1.400 0 1 0 6.700 1.900V8.100A1.400 1.400 0 1 0 8.100 6.700H1.900A1.400 1.400 0 1 0 3.300 8.100Z"/></svg>
<div class="t" style="top:53.20px;left:10.10px;letter-spacing:-0.157px;">In neuem Fenster öffnen …</div><div class="t" style="top:53.20px;left:191.60px;color:#bdb5b4;font-size:12px;">O</div><svg style="left:181.10px;top:56.10px" width="8.6" height="8.6" viewBox="0 0 10 10" fill="none" stroke="#bdb5b4" stroke-width="1.050"><path d="M3.300 1.900A1.400 1.400 0 1 0 1.900 3.300H8.100A1.400 1.400 0 1 0 6.700 1.900V8.100A1.400 1.400 0 1 0 8.100 6.700H1.900A1.400 1.400 0 1 0 3.300 8.100Z"/></svg><svg style="left:170.00px;top:55.90px" width="8.600" height="9" viewBox="0 0 8.600 9" fill="none" stroke="#bdb5b4" stroke-width="1" stroke-linejoin="round"><path d="M4.300 .5L8.100 4.400H6.200V8.500H2.400V4.400H.5Z"/></svg>
<div class="t" style="top:72.20px;left:10.10px;letter-spacing:0.014px;">Benutzte Projekte</div><svg style="left:193.8px;top:75.5px" width="4.800" height="8.400" viewBox="0 0 5 9" fill="none" stroke="#262626" stroke-width="1.500" stroke-linecap="round" stroke-linejoin="round"><path d="M.8 .8l3.400 3.700-3.400 3.700"/></svg>
<div class="sep" style="top:93.2px"></div>
<div class="abs" style="left:2.400px;right:5px;top:98.6px;height:19px;border-radius:4px;background:#dcd2d1"></div><div class="t" style="top:100.20px;left:10.10px;letter-spacing:0.057px;">Importieren</div><svg style="left:193.8px;top:104.0px" width="4.800" height="8.400" viewBox="0 0 5 9" fill="none" stroke="#262626" stroke-width="1.500" stroke-linecap="round" stroke-linejoin="round"><path d="M.8 .8l3.400 3.700-3.400 3.700"/></svg>
<div class="t" style="top:119.20px;left:10.10px;letter-spacing:-0.003px;">Fotos konsolidieren</div>
<div class="sep" style="top:140.7px"></div>
<div class="t" style="top:147.20px;left:10.10px;letter-spacing:-0.003px;">Exportieren</div><svg style="left:193.8px;top:150.9px" width="4.800" height="8.400" viewBox="0 0 5 9" fill="none" stroke="#262626" stroke-width="1.500" stroke-linecap="round" stroke-linejoin="round"><path d="M.8 .8l3.400 3.700-3.400 3.700"/></svg>
<div class="t" style="top:166.20px;left:10.10px;letter-spacing:-0.052px;">Drucken</div><div class="t" style="top:166.20px;left:191.60px;color:#bdb5b4;font-size:12px;">P</div><svg style="left:181.10px;top:169.80px" width="8.6" height="8.6" viewBox="0 0 10 10" fill="none" stroke="#bdb5b4" stroke-width="1.050"><path d="M3.300 1.900A1.400 1.400 0 1 0 1.900 3.300H8.100A1.400 1.400 0 1 0 6.700 1.900V8.100A1.400 1.400 0 1 0 8.100 6.700H1.900A1.400 1.400 0 1 0 3.300 8.100Z"/></svg>
<div class="sep" style="top:188.7px"></div>
<div class="t" style="top:195.20px;left:10.10px;letter-spacing:-0.008px;">Projekt schließen</div>
</div>
<div class="menu" style="left:345px;top:129.3px;width:112.500px;height:45.700px">
<div class="t" style="top:5.70px;left:12.30px;letter-spacing:-0.214px;">Fotos...</div>
<svg style="left:77.20px;top:9.20px" width="8.600" height="9" viewBox="0 0 8.600 9" fill="none" stroke="#bdb5b4" stroke-width="1" stroke-linejoin="round"><path d="M4.300 .5L8.100 4.400H6.200V8.500H2.400V4.400H.5Z"/></svg>
<svg style="left:86.50px;top:9.40px" width="8.6" height="8.6" viewBox="0 0 10 10" fill="none" stroke="#bdb5b4" stroke-width="1.050"><path d="M3.300 1.900A1.400 1.400 0 1 0 1.900 3.300H8.100A1.400 1.400 0 1 0 6.700 1.900V8.100A1.400 1.400 0 1 0 8.100 6.700H1.900A1.400 1.400 0 1 0 3.300 8.100Z"/></svg>
<div class="t" style="top:5.70px;left:97.30px;color:#bdb5b4;font-size:12px;">I</div>
<div class="abs" style="left:4.300px;right:3.700px;top:23px;height:18.500px;border-radius:4px;background:#4a9af8"></div>
<div class="t" style="top:24.70px;left:12.30px;letter-spacing:-0.180px;color:#fff;">Ordner...</div>
</div>
</div></body></html>
